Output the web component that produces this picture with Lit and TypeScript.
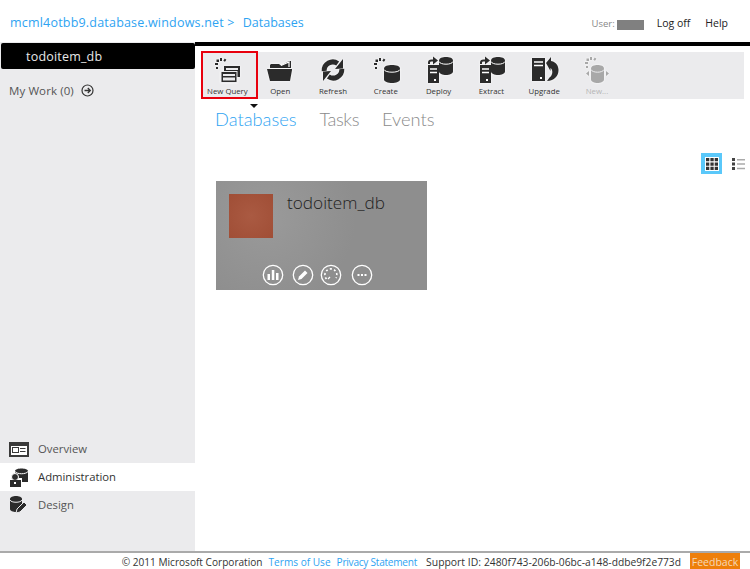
import { LitElement, css, html, svg } from 'lit';
import { customElement } from 'lit/decorators.js';

const dark = '#2b2b2b';

// dotted "spinner" arc used by New Query / Create / New...
const dots = (x: number, y: number, fill = dark) => svg`
  <g fill=${fill}>
    <rect x=${x + 5} y=${y} width="2" height="3" />
    <rect x=${x + 9} y=${y + 1} width="2" height="2.500" transform="rotate(35 ${x + 10} ${y + 2})" />
    <rect x=${x + 1.500} y=${y + 1.500} width="2.500" height="2.500" />
    <rect x=${x} y=${y + 5} width="3" height="2" />
    <rect x=${x + 1} y=${y + 9} width="2" height="2" />
  </g>`;

const cylinder = (x: number, y: number, w: number, h: number, fill = dark, line = '#fff') => svg`
  <path fill=${fill} d="M${x} ${y + 3.500}c0-4.600 ${w}-4.600 ${w} 0v${h - 7}c0 4.600-${w} 4.600-${w} 0z" />
  <path fill="none" stroke=${line} stroke-width="1" d="M${x} ${y + 4.500}c1 3.600 ${w - 1} 3.600 ${w} 0" />`;

const server = (x: number, y: number, w: number, h: number) => svg`
  <rect x=${x} y=${y} width=${w} height=${h} fill=${dark} />
  <path stroke="#fff" stroke-width="1.300" d="M${x + 2} ${y + 4}h${w - 4}M${x + 2} ${y + 7.500}h${w - 4}" />
  <rect x=${x + w - 5} y=${y + h - 4} width="2" height="2" fill="#fff" />`;

const arrow = (x: number, y: number) => svg`
  <path fill="none" stroke=${dark} stroke-width="2" d="M${x + 1} ${y + 6}v-1.500c0-1.500 1-2 2.500-2h2" />
  <path fill=${dark} d="M${x + 5} ${y - 1.500}l5 4-5 4z" />`;

const tools = [
  {
    label: 'New Query',
    icon: svg`${dots(4, 3)}
      <rect x="13" y="11" width="16" height="11" fill="#2b2b2b" />
      <rect x="15" y="13" width="12" height="2" fill="#ebebed" />
      <rect x="10" y="16.500" width="16" height="11" fill="#2b2b2b" stroke="#ebebed" stroke-width="1" />
      <rect x="12" y="19" width="12" height="2" fill="#ebebed" />
      <rect x="12" y="22.500" width="12" height="3" fill="#ebebed" />`,
  },
  {
    label: 'Open',
    icon: svg`<path fill="#2b2b2b" d="M6 10l1-1h8l2 1.500 8-4.500h2v7H6zM3 14h25v1l-2 11H6z" />
      <path fill="none" stroke="#fff" stroke-width="1.200" d="M17 10.500l8-3.500v5" />`,
  },
  {
    label: 'Refresh',
    icon: svg`<g fill="none" stroke="#2b2b2b" stroke-width="5">
        <path d="M7.200 16a8.600 8.600 0 0 1 13.500-7.500" />
        <path d="M24.800 14a8.600 8.600 0 0 1-13.500 7.500" />
      </g>
      <path fill="#2b2b2b" d="M18 14l8-.5V4zM14 16l-8 .5V26z" />`,
  },
  {
    label: 'Create',
    icon: svg`${dots(4, 3)}${cylinder(14, 10, 16, 18)}`,
  },
  {
    label: 'Deploy',
    icon: svg`${arrow(5, 3)}${server(5, 10, 11, 18)}${cylinder(16, 2, 14, 18)}`,
  },
  {
    label: 'Extract',
    icon: svg`${arrow(5, 3)}${server(5, 10, 11, 18)}${cylinder(16, 2, 14, 18)}`,
  },
  {
    label: 'Upgrade',
    icon: svg`${server(4, 3, 13, 23)}
      <path fill="#2b2b2b" d="M18 8l5-6v4c6 1 7.500 6 7.500 9 0 6-4 10.500-11.500 11l2.500-3.500c3-2 3.500-6 2-8.500l-1-1v3z" />`,
  },
  {
    label: 'New...',
    dim: true,
    icon: svg`${dots(4, 2, '#a8a8a8')}${cylinder(10, 10, 13, 18, '#a8a8a8', '#ebebed')}
      <path fill="#a8a8a8" d="M8 16v5l-3-2.500zM25 16l3 2.500-3 2.500z" />`,
  },
];

const circle = (inner: unknown) => html`<svg class="round" viewBox="0 0 22 22">
  <circle cx="11" cy="11" r="9.700" fill="none" stroke="#fff" stroke-width="1.300" />
  ${inner}
</svg>`;

@customElement('app-root')
export class AppRoot extends LitElement {
  render() {
    return html`
      <header>
        <div class="crumb">
          <span class="server">mcml4otbb9.database.windows.net &gt;</span>
          <span>Databases</span>
        </div>
        <nav>
          <span class="user">User:</span>
          <span class="mask"></span>
          <span class="link first">Log off</span>
          <span class="link">Help</span>
        </nav>
      </header>

      <div class="middle">
        <aside>
          <div class="current">todoitem_db</div>
          <div class="work">
            My Work (0)
            <svg viewBox="0 0 13 13" width="13" height="13">
              <circle cx="6.500" cy="6.500" r="5.500" fill="none" stroke="#333" stroke-width="1.200" />
              <path fill="none" stroke="#333" stroke-width="1.300" d="M3.500 6.500h5.500M6.800 4l2.500 2.500L6.800 9" />
            </svg>
          </div>
          <div class="spacer"></div>
          <div class="nav-item">
            <svg viewBox="0 0 20 20" width="20" height="20">
              <rect x="0" y="3" width="20" height="15" fill="#3a3a3a" />
              <rect x="2" y="7" width="16" height="9" fill="#fff" />
              <rect x="3.500" y="8.500" width="6" height="5" fill="none" stroke="#3a3a3a" />
              <path stroke="#3a3a3a" d="M11 9.500h5.500M11 12.500h5.500" />
            </svg>
            <span>Overview</span>
          </div>
          <div class="nav-item active">
            <svg viewBox="0 0 20 20" width="20" height="20">
              <path fill="#2b2b2b" d="M6 4c0-3.500 13-3.500 13 0v11h-6v-4H6z" />
              <path fill="none" stroke="#fff" d="M6 4.500c2 3 11 3 13 0" />
              <circle cx="6" cy="10" r="3.500" fill="#2b2b2b" stroke="#fff" />
              <rect x="1" y="13" width="11" height="7" fill="#2b2b2b" />
              <rect x="5" y="15" width="2" height="2" fill="#fff" />
            </svg>
            <span>Administration</span>
          </div>
          <div class="nav-item">
            <svg viewBox="0 0 20 20" width="20" height="20">
              <path fill="#2b2b2b" d="M1 4c0-4 12-4 12 0v10c0 4-12 4-12 0z" />
              <path fill="none" stroke="#ebebed" d="M1 5c1 3 11 3 12 0" />
              <path fill="#2b2b2b" stroke="#ebebed" d="M7 18l1-4 7-7 3 3-7 7z" />
            </svg>
            <span>Design</span>
          </div>
        </aside>

        <main>
          <div class="rule"></div>
          <div class="toolbar">
            ${tools.map(
              (t, i) => html`
                <div class="tool ${t.dim ? 'dim' : ''} ${i === 0 ? 'selected' : ''}">
                  <svg viewBox="0 0 32 30" width="32" height="30">${t.icon}</svg>
                  <span>${t.label}</span>
                </div>
              `,
            )}
          </div>
          <div class="tabs">
            <span class="caret"></span>
            <span class="tab on">Databases</span>
            <span class="tab narrow">Tasks</span>
            <span class="tab">Events</span>
          </div>

          <div class="views">
            <div class="view on">
              <svg viewBox="0 0 14 14" width="14" height="14">
                <rect width="14" height="14" fill="#fff" />
                <path fill="#333" d="M1 1h3.300v3.300H1zM5.400 1h3.300v3.300H5.400zM9.700 1H13v3.300H9.700zM1 5.400h3.300v3.300H1zM5.400 5.400h3.300v3.300H5.400zM9.700 5.400H13v3.300H9.700zM1 9.700h3.300V13H1zM5.400 9.700h3.300V13H5.400zM9.700 9.700H13V13H9.700z" />
              </svg>
            </div>
            <div class="view">
              <svg viewBox="0 0 14 14" width="14" height="14">
                <path fill="#444" d="M0 1h3v3H0zM0 5.500h3v3H0zM0 10h3v3H0z" />
                <path fill="#aaa" d="M5 2h8v1.500H5zM5 6.300h8v1.500H5zM5 10.700h8v1.500H5z" />
              </svg>
            </div>
          </div>

          <div class="card">
            <div class="card-top">
              <div class="tile"></div>
              <div class="name">todoitem_db</div>
            </div>
            <div class="actions">
              ${circle(svg`<path fill="#fff" d="M5.500 10h2.500v6H5.500zM9.800 6h2.500v10H9.800zM14 9h2.500v7H14z" />`)}
              ${circle(svg`<path fill="#fff" d="M6 16l1-3.500 6-6 2.500 2.500-6 6z" />`)}
              ${circle(svg`<path fill="none" stroke="#fff" stroke-width="1.600" stroke-dasharray="2 2.200" d="M6.500 15a6 6 0 1 1 9.500-1" /><path stroke="#fff" stroke-width="1.300" d="M8 15l2-2" />`)}
              ${circle(svg`<path fill="#fff" d="M6.500 10h2v2h-2zM10 10h2v2h-2zM13.500 10h2v2h-2z" />`)}
            </div>
          </div>
        </main>
      </div>

      <footer>
        <span class="copy">© 2011 Microsoft Corporation</span>
        <span class="blue">Terms of Use</span>
        <span class="blue privacy">Privacy Statement</span>
        <span class="support">Support ID:</span>
        <span class="id">2480f743-206b-06bc-a148-ddbe9f2e773d</span>
        <span class="feedback">Feedback</span>
      </footer>
    `;
  }

  static styles = css`
    :host {
      display: flex;
      flex-direction: column;
      width: 750px;
      height: 569px;
      overflow: hidden;
      background: #fff;
      font-family: 'Open Sans', 'Noto Sans', sans-serif;
      color: #333;
    }
    header {
      flex: 0 0 42px;
      display: flex;
      justify-content: space-between;
      align-items: center;
      box-sizing: border-box;
      padding: 3px 22px 0 10px;
      font-size: 10.500px;
    }
    .crumb {
      display: flex;
      gap: 8px;
      font-size: 12.500px;
      color: #2ea3f2;
      margin-top: -1px;
    }
    .server {
      letter-spacing: 0.2px;
    }
    nav {
      display: flex;
      align-items: center;
      margin-top: 1px;
      color: #222;
    }
    .user {
      color: #888;
      font-size: 9.500px;
    }
    .mask {
      width: 27px;
      height: 10px;
      margin: 4px 0 0 2px;
      background: #808080;
    }
    .link {
      margin-left: 15px;
    }
    .link.first {
      margin-left: 13px;
    }
    .middle {
      flex: 1;
      display: flex;
      min-height: 0;
    }
    aside {
      flex: 0 0 195px;
      display: flex;
      flex-direction: column;
      background: #ebebed;
      padding-bottom: 32px;
      box-sizing: border-box;
    }
    .current {
      height: 26px;
      margin: 1px 0 0 1px;
      padding-left: 25px;
      line-height: 27px;
      font-size: 12.500px;
      letter-spacing: 0.2px;
      color: #e8e8e8;
      background: #000;
      border-radius: 2px;
    }
    .work {
      display: flex;
      align-items: center;
      gap: 7px;
      margin: 14px 0 0 9px;
      font-size: 11.500px;
      letter-spacing: 0.1px;
      color: #555;
    }
    .spacer {
      flex: 1;
    }
    .nav-item {
      display: flex;
      align-items: center;
      gap: 9px;
      height: 28px;
      padding-left: 9px;
      font-size: 11.300px;
      color: #555;
    }
    .nav-item span {
      margin-top: -2px;
    }
    .nav-item svg {
      margin-top: -1px;
    }
    .nav-item.active {
      background: #fff;
      color: #333;
    }
    main {
      flex: 1;
      display: flex;
      flex-direction: column;
      min-width: 0;
    }
    .rule {
      height: 4px;
      background: #000;
    }
    .toolbar {
      display: flex;
      margin: 6px 6px 0;
      height: 47px;
      background: #ebebed;
    }
    .tool {
      position: relative;
      flex: 0 0 52.800px;
      display: flex;
      flex-direction: column;
      align-items: center;
      font-size: 7.800px;
      color: #333;
      box-sizing: border-box;
      padding-top: 3px;
      line-height: 12px;
    }
    .tool svg {
      flex: none;
      filter: drop-shadow(0 0 1px #fff);
    }
    .tool.selected::after {
      content: '';
      position: absolute;
      left: 0;
      right: -4px;
      top: -1px;
      bottom: 0;
      border: 2px solid #e8000d;
    }
    .tool.dim {
      color: #b5b5b5;
    }
    .tabs {
      position: relative;
      display: flex;
      gap: 23px;
      margin: 7px 0 0 20px;
      font-family: Lato, 'Open Sans', sans-serif;
      font-size: 18.300px;
      font-weight: 300;
      line-height: 27px;
      color: #8a8a8a;
    }
    .tab.on {
      color: #2ea3f2;
    }
    .tab.narrow {
      letter-spacing: -0.4px;
    }
    .caret {
      position: absolute;
      left: 35px;
      top: -2px;
      border: 4px solid transparent;
      border-top-color: #111;
      border-bottom: 0;
    }
    .views {
      display: flex;
      align-items: center;
      justify-content: flex-end;
      gap: 6px;
      margin: 20px 0 0;
      padding-right: 1px;
    }
    .view {
      width: 21px;
      height: 21px;
      display: flex;
      align-items: center;
      justify-content: center;
    }
    .view.on {
      background: #5ac8fa;
    }
    .card {
      display: flex;
      flex-direction: column;
      justify-content: space-between;
      width: 211px;
      height: 109px;
      margin: 7px 0 0 21px;
      background: radial-gradient(circle at 50px 36px, #9a9a9a, #8e8e8e 90px);
      box-sizing: border-box;
      padding: 13px 0 4px 13px;
    }
    .card-top {
      display: flex;
      gap: 14px;
    }
    .tile {
      width: 44px;
      height: 44px;
      background: radial-gradient(circle at 50% 50%, #aa5a42, #a04e36);
    }
    .name {
      font-size: 17.200px;
      line-height: 18px;
      font-weight: 300;
      color: #222;
    }
    .actions {
      display: flex;
      gap: 8px;
      padding-left: 33px;
    }
    .round {
      width: 22px;
      height: 22px;
    }
    .round:nth-child(3) {
      margin-left: -2px;
    }
    .round:nth-child(4) {
      margin-left: 1px;
    }
    footer {
      flex: 0 0 18px;
      min-height: 0;
      display: flex;
      align-items: center;
      justify-content: flex-end;
      gap: 7px;
      border-top: 2px solid #aaa;
      box-sizing: border-box;
      padding-right: 10px;
      font-size: 10.100px;
      line-height: 14px;
      color: #333;
    }
    footer span:not(.feedback) {
      margin-top: 2px;
    }
    .copy {
      margin-right: -1px;
    }
    .blue {
      color: #2ea3f2;
    }
    .privacy {
      margin-left: -1px;
      letter-spacing: -0.25px;
    }
    .support {
      margin-left: 2px;
      font-size: 10.400px;
    }
    .id {
      margin-left: -4px;
      font-size: 10.250px;
    }
    .feedback {
      flex: none;
      height: 16px;
      width: 50px;
      margin-left: 2px;
      box-sizing: border-box;
      padding-top: 1px;
      background: #ee7f0a;
      color: #f5d9b8;
      text-align: center;
      line-height: 16px;
      font-size: 10.500px;
    }
  `;
}
